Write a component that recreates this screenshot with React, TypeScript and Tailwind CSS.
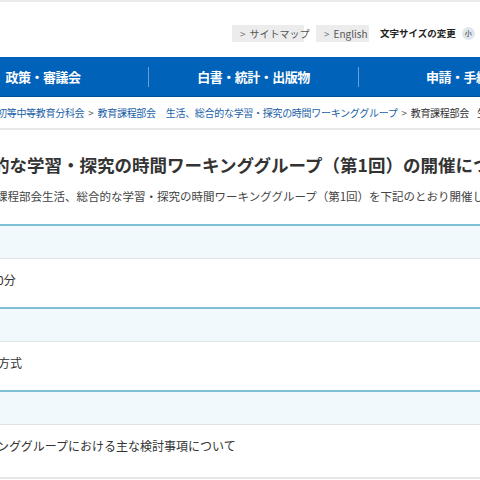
const jp = "font-['Meiryo','Noto_Sans_CJK_JP','Noto_Sans',sans-serif]";

function TopLink({ label, width }: { label: string; width: string }) {
  return (
    <a className={`flex items-center gap-[4px] h-[17px] ${width} pl-[8px] bg-[#ececec] text-[10px] text-[#555] leading-none`}>
      <span className="text-[#777]">&gt;</span>
      <span>{label}</span>
    </a>
  );
}

function Row({ text, offset, height = 'h-[48px]' }: { text: string; offset: string; height?: string }) {
  return (
    <div>
      <div className="h-[2px] bg-[#7fbfd3]" />
      <div className="h-[33px] bg-[#f2f9fc] border-b border-[#dde3e7]" />
      <div className={`${height} pt-[12px] ${offset} text-[12px] leading-[18px] text-[#333]`}>{text}</div>
    </div>
  );
}

export default function App() {
  return (
    <div className={`w-[480px] h-[480px] overflow-hidden bg-white ${jp}`}>
      <header className="h-[57px] border-t-2 border-[#ebebeb] flex items-start pt-[23px]">
        <div className="flex items-center ml-[232px] whitespace-nowrap">
          <TopLink label="サイトマップ" width="w-[72px]" />
          <div className="ml-[12px]">
            <TopLink label="English" width="w-[53px]" />
          </div>
          <span className="ml-[11px] text-[9.5px] font-bold text-[#222]">文字サイズの変更</span>
          <span className="ml-[6px] w-[13px] h-[13px] rounded-full bg-[#dfe7ee] text-[7px] text-[#333] flex items-center justify-center">小</span>
          <span className="ml-[7px] w-[14px] h-[17px] rounded-[3px] bg-[#0062b8]" />
        </div>
      </header>

      <nav className="h-[40px] bg-[#0062b8] border-b border-[#004f96] flex items-center -ml-[62px] whitespace-nowrap">
        {['政策・審議会', '白書・統計・出版物', '申請・手続き'].map((item, i) => (
          <div
            key={item}
            className={`w-[210px] shrink-0 h-[20px] flex items-center justify-center text-white text-[13px] font-bold tracking-[-0.5px] ${i > 0 ? 'border-l border-[#6a9fd6]' : ''}`}
          >
            {item}
          </div>
        ))}
      </nav>

      <div className="h-[31px] flex items-center -ml-[3px] whitespace-nowrap text-[10px] tracking-[-0.3px] text-[#1a5fa8]">
        <a>初等中等教育分科会</a>
        <span className="mx-[4px] text-[#555]">&gt;</span>
        <a>教育課程部会</a>
        <a className="ml-[10px]">生活、総合的な学習・探究の時間ワーキンググループ</a>
        <span className="mx-[4px] text-[#555]">&gt;</span>
        <span className="text-[#333]">教育課程部会</span>
        <span className="ml-[8px] text-[#333]">生</span>
      </div>
      <div className="h-[2px] bg-[#e8e8e8]" />

      <div className="h-[94px] pt-[22px] whitespace-nowrap">
        <h1 className="-ml-[8px] text-[17.5px] leading-[26px] font-bold text-[#333]">
          的な学習・探究の時間ワーキンググループ（第1回）の開催につ
        </h1>
        <p className="-ml-[4px] mt-[9px] text-[11.5px] leading-[18px] text-[#444]">
          課程部会生活、総合的な学習・探究の時間ワーキンググループ（第1回）を下記のとおり開催し
        </p>
      </div>

      <div className="whitespace-nowrap">
        <Row text="0分" offset="-ml-[3px]" />
        <Row text="方式" offset="-ml-[2px]" />
        <Row text="ンググループにおける主な検討事項について" offset="-ml-[3px]" height="h-[52px]" />
        <div className="h-[2px] bg-[#e6e6e6]" />
      </div>
    </div>
  );
}
